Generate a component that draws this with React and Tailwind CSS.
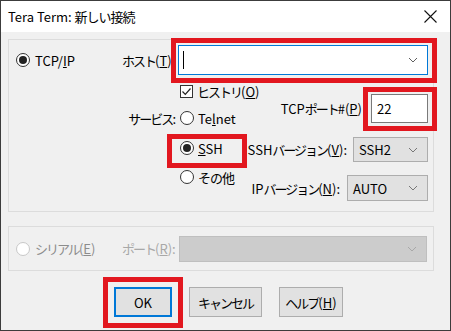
import React from "react";

const RED = "absolute border-[5px] border-[#e2171f] pointer-events-none";

// narrow the full-width kana so the labels take the width of Yu Gothic UI
function J({ children, className = "" }) {
  return <span className={"tracking-[-2px] " + className}>{children}</span>;
}

function Radio({ checked, disabled }) {
  return (
    <span
      className={
        "w-[14px] h-[14px] rounded-full border flex items-center justify-center shrink-0 " +
        (disabled ? "border-[#c8c8c8] bg-white" : "border-[#333333] bg-white")
      }
    >
      {checked && <span className="w-[8px] h-[8px] rounded-full bg-[#222222]" />}
    </span>
  );
}

function Checkbox() {
  return (
    <span className="w-[13px] h-[13px] border border-[#333333] bg-white flex items-center justify-center shrink-0">
      <svg width="11" height="11" viewBox="0 0 11 11">
        <path d="M1.5 5.5 L4.3 8.3 L9.5 2.5" fill="none" stroke="#222" strokeWidth="1.2" />
      </svg>
    </span>
  );
}

function Chevron({ color = "#777777" }) {
  return (
    <svg width="10" height="6" viewBox="0 0 10 6">
      <path d="M1 1 L5 5 L9 1" fill="none" stroke={color} strokeWidth="1" />
    </svg>
  );
}

function Select({ value, className }) {
  return (
    <div
      className={
        "bg-[#e1e1e1] border border-[#adadad] flex items-center justify-between pl-[5px] pr-[9px] shrink-0 " +
        className
      }
    >
      <span>{value}</span>
      <Chevron />
    </div>
  );
}

export default function App() {
  return (
    <div className="relative w-[451px] h-[331px] border border-[#3c3c3c] bg-[#f0f0f0] overflow-hidden whitespace-nowrap text-[13px] leading-none text-black [font-family:'Noto_Sans_CJK_JP',sans-serif]">
      {/* title bar */}
      <div className="h-[31px] bg-white flex items-center justify-between pl-[7px] pr-[13px]">
        <span>
          Tera Term: <span className="tracking-[-1px]">新しい接続</span>
        </span>
        <svg width="13" height="13" viewBox="0 0 13 13">
          <path d="M0.5 0.5 L12.5 12.5 M12.5 0.5 L0.5 12.5" stroke="#111" strokeWidth="1.1" />
        </svg>
      </div>

      {/* TCP/IP group */}
      <div className="ml-[7px] mt-[7px] w-[426px] h-[173px] border border-[#dcdcdc]">
        <div className="mt-[5px] h-[30px] flex items-center">
          <div className="w-[113px] shrink-0 pl-[7px] flex items-center gap-[5px]">
            <Radio checked />
            <span>
              TCP/<u>I</u>P
            </span>
          </div>
          <div className="w-[56px] shrink-0">
            <J>ホスト</J>(<u>T</u>)
          </div>
          <div className="w-[250px] h-[30px] shrink-0 bg-white border border-[#0078d7] flex items-center justify-between pl-[4px] pr-[9px]">
            <span className="w-px h-[18px] bg-black" />
            <Chevron color="#606060" />
          </div>
        </div>

        <div className="flex">
          {/* left column */}
          <div className="w-[239px] shrink-0">
            <div className="mt-[7px] h-[18px] flex items-center pl-[171px] gap-[4px]">
              <Checkbox />
              <span>
                <J>ヒストリ</J>(<u>O</u>)
              </span>
            </div>
            <div className="mt-[9px] h-[18px] flex items-center">
              <span className="w-[171px] text-right pr-[4px]">
                <J>サービス</J>:
              </span>
              <Radio />
              <span className="ml-[4px]">
                Te<u>l</u>net
              </span>
            </div>
            <div className="mt-[12px] h-[18px] flex items-center pl-[171px] gap-[4px]">
              <Radio checked />
              <span>
                <u>S</u>SH
              </span>
            </div>
            <div className="mt-[11px] h-[18px] flex items-center pl-[171px] gap-[4px]">
              <Radio />
              <span className="tracking-[-1px]">その他</span>
            </div>
          </div>

          {/* right column */}
          <div className="flex-1 min-w-0 pr-[5px] flex flex-col items-end">
            <div className="mt-[19px] flex items-center gap-[9px]">
              <span>
                TCP<J>ポート</J>#(<u>P</u>)
              </span>
              <div className="w-[57px] h-[29px] shrink-0 bg-white border border-[#7a7a7a] flex items-center pl-[5px]">
                22
              </div>
            </div>
            <div className="mt-[14px] flex items-center gap-[6px]">
              <span>
                SSH<J>バージョン</J>(<u>V</u>):
              </span>
              <Select value="SSH2" className="w-[75px] h-[25px]" />
            </div>
            <div className="mt-[13px] flex items-center gap-[7px]">
              <span>
                IP<J>バージョン</J>(<u>N</u>):
              </span>
              <Select value="AUTO" className="w-[81px] h-[26px]" />
            </div>
          </div>
        </div>
      </div>

      {/* serial group */}
      <div className="ml-[7px] mt-[14px] w-[426px] h-[45px] border border-[#dcdcdc] flex items-center">
        <div className="w-[113px] shrink-0 pl-[7px] flex items-center gap-[5px]">
          <Radio disabled />
          <span className="text-[#8c8c8c]">
            <J>シリアル</J>(<u>E</u>)
          </span>
        </div>
        <div className="w-[57px] shrink-0 text-[#a8a8a8]">
          <J>ポート</J>(<u>R</u>):
        </div>
        <div className="w-[248px] h-[26px] shrink-0 bg-[#cccccc] border border-[#bfbfbf] flex items-center justify-end pr-[9px]">
          <Chevron color="#a8a8a8" />
        </div>
      </div>

      {/* buttons */}
      <div className="mt-[16px] flex gap-[17px] pl-[113px]">
        <button className="w-[58px] h-[30px] bg-[#e1e1e1] border-2 border-[#0078d7] flex items-center justify-center">
          OK
        </button>
        <button className="w-[73px] h-[30px] bg-[#e1e1e1] border border-[#adadad] flex items-center justify-center">
          <J>キャンセル</J>
        </button>
        <button className="w-[64px] h-[30px] bg-[#e1e1e1] border border-[#adadad] flex items-center justify-center">
          <J>ヘルプ</J>(<u>H</u>)
        </button>
      </div>

      {/* red highlight boxes */}
      <div className={RED + " left-[170px] top-[37px] w-[266px] h-[45px]"} />
      <div className={RED + " left-[362px] top-[86px] w-[74px] h-[44px]"} />
      <div className={RED + " left-[166px] top-[133px] w-[80px] h-[34px]"} />
      <div className={RED + " left-[102px] top-[276px] w-[80px] h-[51px]"} />
    </div>
  );
}
